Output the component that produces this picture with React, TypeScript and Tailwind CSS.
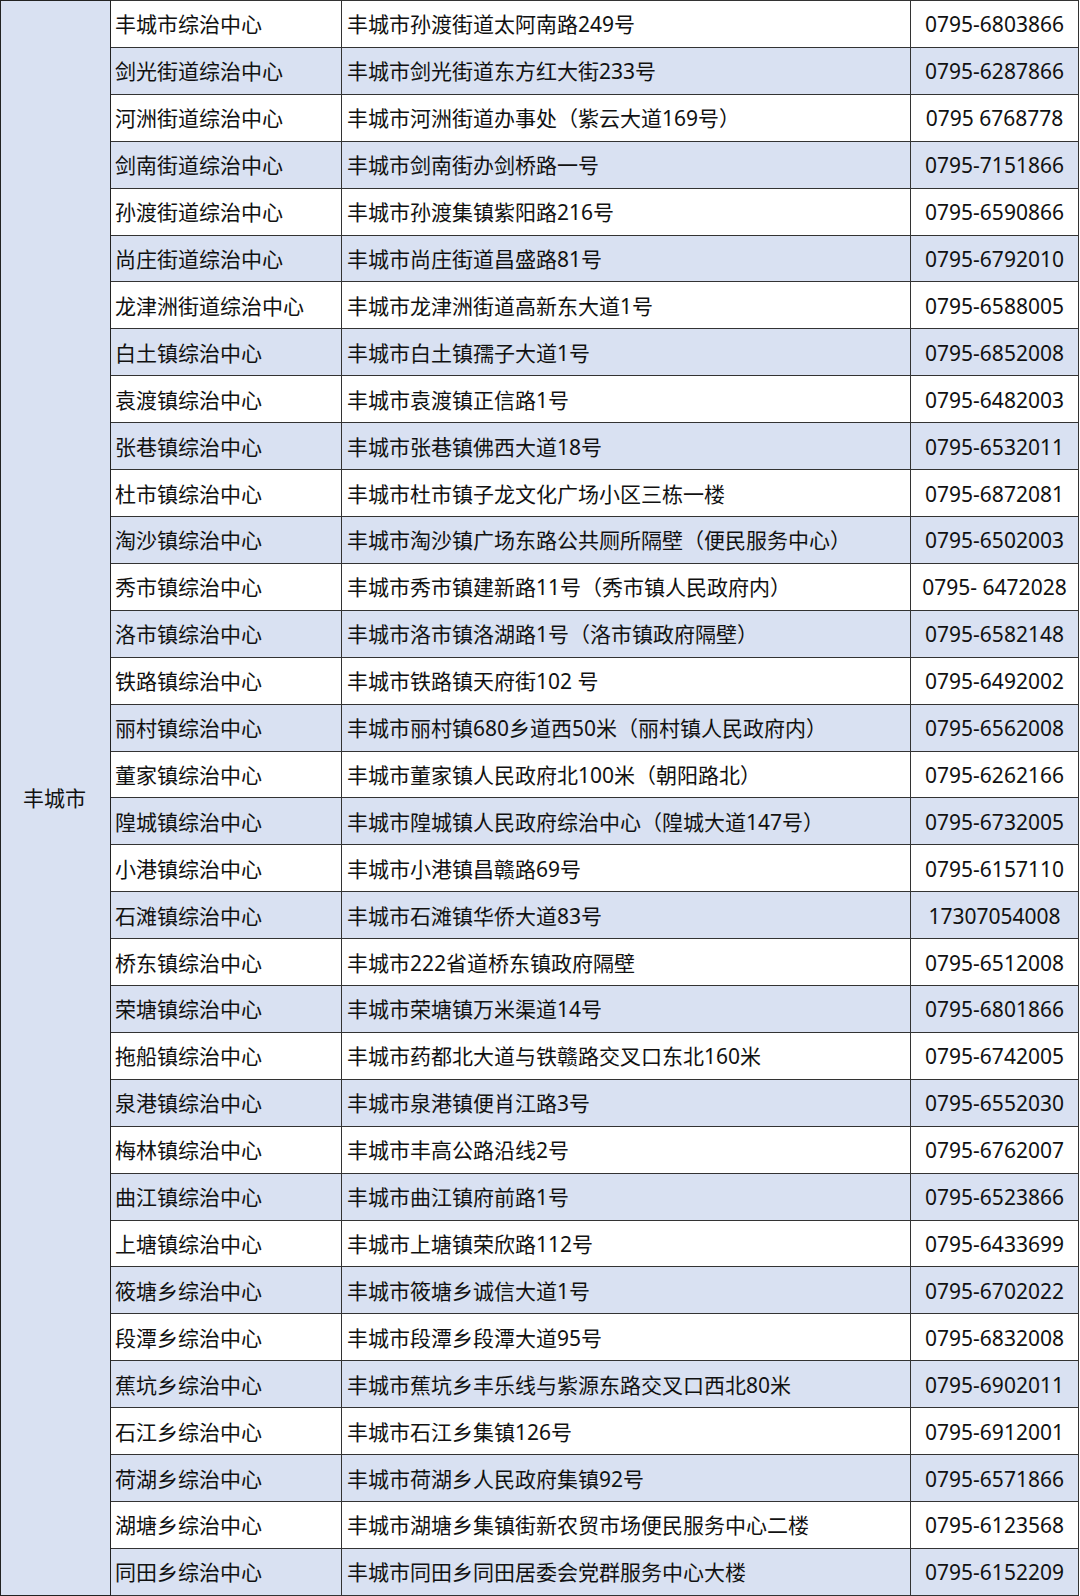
import React from "react";

const rows: [string, string, string][] = [
  ["丰城市综治中心", "丰城市孙渡街道太阿南路249号", "0795-6803866"],
  ["剑光街道综治中心", "丰城市剑光街道东方红大街233号", "0795-6287866"],
  ["河洲街道综治中心", "丰城市河洲街道办事处（紫云大道169号）", "0795 6768778"],
  ["剑南街道综治中心", "丰城市剑南街办剑桥路一号", "0795-7151866"],
  ["孙渡街道综治中心", "丰城市孙渡集镇紫阳路216号", "0795-6590866"],
  ["尚庄街道综治中心", "丰城市尚庄街道昌盛路81号", "0795-6792010"],
  ["龙津洲街道综治中心", "丰城市龙津洲街道高新东大道1号", "0795-6588005"],
  ["白土镇综治中心", "丰城市白土镇孺子大道1号", "0795-6852008"],
  ["袁渡镇综治中心", "丰城市袁渡镇正信路1号", "0795-6482003"],
  ["张巷镇综治中心", "丰城市张巷镇佛西大道18号", "0795-6532011"],
  ["杜市镇综治中心", "丰城市杜市镇子龙文化广场小区三栋一楼", "0795-6872081"],
  ["淘沙镇综治中心", "丰城市淘沙镇广场东路公共厕所隔壁（便民服务中心）", "0795-6502003"],
  ["秀市镇综治中心", "丰城市秀市镇建新路11号（秀市镇人民政府内）", "0795- 6472028"],
  ["洛市镇综治中心", "丰城市洛市镇洛湖路1号（洛市镇政府隔壁）", "0795-6582148"],
  ["铁路镇综治中心", "丰城市铁路镇天府街102 号", "0795-6492002"],
  ["丽村镇综治中心", "丰城市丽村镇680乡道西50米（丽村镇人民政府内）", "0795-6562008"],
  ["董家镇综治中心", "丰城市董家镇人民政府北100米（朝阳路北）", "0795-6262166"],
  ["隍城镇综治中心", "丰城市隍城镇人民政府综治中心（隍城大道147号）", "0795-6732005"],
  ["小港镇综治中心", "丰城市小港镇昌赣路69号", "0795-6157110"],
  ["石滩镇综治中心", "丰城市石滩镇华侨大道83号", "17307054008"],
  ["桥东镇综治中心", "丰城市222省道桥东镇政府隔壁", "0795-6512008"],
  ["荣塘镇综治中心", "丰城市荣塘镇万米渠道14号", "0795-6801866"],
  ["拖船镇综治中心", "丰城市药都北大道与铁赣路交叉口东北160米", "0795-6742005"],
  ["泉港镇综治中心", "丰城市泉港镇便肖江路3号", "0795-6552030"],
  ["梅林镇综治中心", "丰城市丰高公路沿线2号", "0795-6762007"],
  ["曲江镇综治中心", "丰城市曲江镇府前路1号", "0795-6523866"],
  ["上塘镇综治中心", "丰城市上塘镇荣欣路112号", "0795-6433699"],
  ["筱塘乡综治中心", "丰城市筱塘乡诚信大道1号", "0795-6702022"],
  ["段潭乡综治中心", "丰城市段潭乡段潭大道95号", "0795-6832008"],
  ["蕉坑乡综治中心", "丰城市蕉坑乡丰乐线与紫源东路交叉口西北80米", "0795-6902011"],
  ["石江乡综治中心", "丰城市石江乡集镇126号", "0795-6912001"],
  ["荷湖乡综治中心", "丰城市荷湖乡人民政府集镇92号", "0795-6571866"],
  ["湖塘乡综治中心", "丰城市湖塘乡集镇街新农贸市场便民服务中心二楼", "0795-6123568"],
  ["同田乡综治中心", "丰城市同田乡同田居委会党群服务中心大楼", "0795-6152209"],
];

export default function App() {
  return (
    <div className="w-[1080px] h-[1596px] bg-white overflow-hidden">
      <table
        className="w-[1078px] h-[1596px] border-collapse table-fixed text-[21px] text-[#111] leading-none"
        style={{ fontFamily: '"Noto Sans", "Noto Sans CJK SC", sans-serif' }}
      >
        <colgroup>
          <col className="w-[110px]" />
          <col className="w-[231px]" />
          <col className="w-[569px]" />
          <col className="w-[168px]" />
        </colgroup>
        <tbody>
          {rows.map((r, i) => (
            <tr key={i} className={i % 2 === 0 ? "bg-white" : "bg-[#d9e1f2]"}>
              {i === 0 && (
                <td
                  rowSpan={rows.length}
                  className="bg-[#d9e1f2] border border-[#222] pl-[22px] align-middle whitespace-nowrap"
                >
                  丰城市
                </td>
              )}
              <td className="border border-[#333] pl-[4px] pt-[2px] whitespace-nowrap">{r[0]}</td>
              <td className="border border-[#333] pl-[5px] pt-[2px] whitespace-nowrap">{r[1]}</td>
              <td className="border border-[#333] text-center pt-[2px] whitespace-nowrap">{r[2]}</td>
            </tr>
          ))}
        </tbody>
      </table>
    </div>
  );
}
